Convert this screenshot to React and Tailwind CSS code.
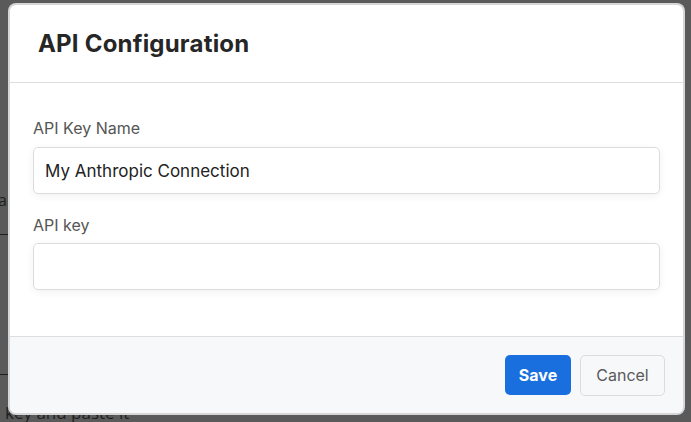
export default function App() {
  return (
    <div className="relative w-[691px] h-[422px] overflow-hidden bg-[#5a5a5a] font-['Inter','Noto_Sans',sans-serif]">
      {/* page behind the overlay */}
      <div className="flex flex-col pt-[188px] text-[#1e1e1e] font-['Open_Sans',sans-serif]">
        <div className="h-[24px] -ml-[2px] text-[16px] leading-[24px]">ar</div>
        <div className="mt-[22px] w-[12px] border-t border-[#1e1e1e]" />
        <div className="mt-[139px] w-[12px] border-t border-[#1e1e1e]" />
        <div className="mt-[26px] pl-[5px] text-[17px] leading-[24px]">key and paste it</div>
      </div>

      {/* modal */}
      <div className="absolute left-[10px] top-[5px] w-[673px] h-[408px] flex flex-col bg-white rounded-[6px] ring-2 ring-[#d6d6d6] overflow-hidden">
        <div className="h-[78px] flex items-center pl-[28px] border-b border-[#dedede]">
          <h1 className="text-[24px] font-bold text-[#262626] tracking-[0.2px]">API Configuration</h1>
        </div>

        <div className="flex-1 flex flex-col px-[23px] pt-[35px]">
          <label className="text-[16px] leading-[20px] text-[#555]">API Key Name</label>
          <input
            type="text"
            defaultValue="My Anthropic Connection"
            className="mt-[9px] h-[47px] w-full px-[11px] text-[17px] text-[#222] bg-white border border-[#dcdcdc] rounded-[5px] shadow-[0_2px_8px_rgba(0,0,0,0.06)] outline-none"
          />
          <label className="mt-[21px] text-[16px] leading-[20px] text-[#555]">API key</label>
          <input
            type="text"
            className="mt-[8px] h-[47px] w-full px-[11px] text-[17px] text-[#222] bg-white border border-[#dcdcdc] rounded-[5px] shadow-[0_2px_8px_rgba(0,0,0,0.06)] outline-none"
          />
        </div>

        <div className="h-[77px] flex items-center justify-end gap-[9px] pr-[18px] bg-[#f7f8fa] border-t border-[#dedede]">
          <button className="h-[40px] w-[66px] rounded-[5px] bg-[#1a6fdf] text-white text-[16px] font-bold">Save</button>
          <button className="h-[41px] w-[85px] rounded-[5px] border border-[#dcdcdc] bg-[#f7f8fa] text-[#5a5a5a] text-[16px]">Cancel</button>
        </div>
      </div>
    </div>
  )
}
